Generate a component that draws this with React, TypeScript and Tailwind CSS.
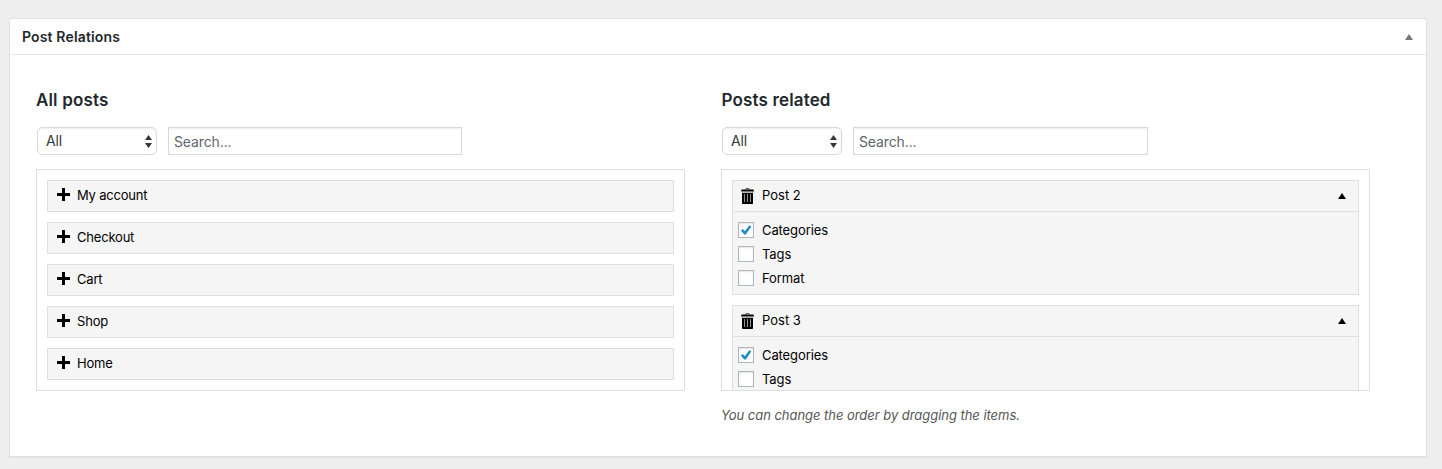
import React from "react";

const posts = ["My account", "Checkout", "Cart", "Shop", "Home"];
const related = [
  { title: "Post 2", parts: ["Categories", "Tags", "Format"] },
  { title: "Post 3", parts: ["Categories", "Tags"] },
];

function PlusIcon() {
  return (
    <svg width="13" height="13" viewBox="0 0 13 13" shapeRendering="crispEdges" className="mb-[3px] ml-[9px] mr-[7px] shrink-0">
      <path d="M5 0h3v5h5v3H8v5H5V8H0V5h5z" fill="#000" />
    </svg>
  );
}

function TrashIcon() {
  return (
    <svg width="13" height="16" viewBox="0 0 13 16" className="ml-2 mr-2 shrink-0">
      <path d="M4.500 1.600C4.600.8 5 .5 6.500.5s1.900.3 2 1.100" fill="none" stroke="#222" strokeWidth="1" />
      <path d="M.6 1.500h11.800L13 3.600H0z" fill="#000" />
      <path d="M1 4.800h11v10.400q0 .8-.8.800H1.800Q1 16 1 15.200z" fill="#000" />
      <path d="M3.500 6v8M6.500 6v8M9.500 6v8" stroke="#8f8f8f" strokeWidth="1" />
    </svg>
  );
}

function Triangle({ className }: { className: string }) {
  return (
    <svg width="8" height="6" viewBox="0 0 8 6" className={className}>
      <path d="M4 0l4 6H0z" fill="currentColor" />
    </svg>
  );
}

function Filters({ inputWidth }: { inputWidth: string }) {
  return (
    <div className="ml-px flex h-7 gap-[11px]">
      <div className="flex w-[120px] items-center justify-between rounded-[5px] border border-[#d9d9d9] bg-white pl-2 pr-1 text-[14px] text-[#32373c] shadow-[inset_0_1px_2px_rgba(0,0,0,0.07)]">
        <span className="tracking-[-0.1px]">All</span>
        <svg width="7" height="13" viewBox="0 0 7 13" className="text-[#32373c]">
          <path d="M3.500 0L7 5H0zM0 8h7l-3.500 5z" fill="currentColor" />
        </svg>
      </div>
      <input
        placeholder="Search..."
        className={`${inputWidth} border border-[#d9d9d9] bg-white px-[5px] pt-[2px] text-[14px] tracking-[-0.12px] text-[#32373c] shadow-[inset_0_1px_2px_rgba(0,0,0,0.07)] outline-none placeholder:text-[#5f656a]`}
      />
    </div>
  );
}

function Checkbox({ checked }: { checked: boolean }) {
  return (
    <span className="flex h-4 w-4 shrink-0 items-center justify-center border border-[#b0b5ba] bg-white shadow-[inset_0_1px_2px_rgba(0,0,0,0.1)]">
      {checked && (
        <svg width="12" height="12" viewBox="0 0 12 12" className="shrink-0">
          <path d="M.9 6.400l2-1.500 1.900 2.300L9.400 1.300l1.900 1.200L5.800 10.500H4.200z" fill="#1e8cbe" />
        </svg>
      )}
    </span>
  );
}

function RelatedItem({ title, parts }: { title: string; parts: string[] }) {
  return (
    <div className="h-[115px] shrink-0 border border-[#dfdfdf] bg-[#f5f5f5]">
      <div className="flex h-[31px] items-center border-b border-[#dfdfdf]">
        <TrashIcon />
        <span className="pb-[2px]">{title}</span>
        <Triangle className="mb-px ml-auto mr-3 text-black" />
      </div>
      <div className="flex flex-col gap-2 pl-[5px] pt-[10px]">
        {parts.map((part) => (
          <label key={part} className="flex h-4 items-center gap-2">
            <Checkbox checked={part === "Categories"} />
            <span className="tracking-[-0.1px]">{part}</span>
          </label>
        ))}
      </div>
    </div>
  );
}

export default function App() {
  return (
    <div className="h-[469px] overflow-hidden bg-[#eee] pl-[9px] pt-[18px] font-['Inter','Liberation_Sans',sans-serif] text-[13px] leading-[18px] text-black">
      <section className="h-[439px] w-[1418px] border border-[#e1e1e1] bg-white shadow-[0_1px_1px_rgba(0,0,0,0.04)]">
        <header className="flex h-9 items-center justify-between border-b border-[#e8e8e8] pl-3 pr-[14px] text-[14px] font-semibold text-[#23282d]">
          <h2 className="tracking-[0.15px]">Post Relations</h2>
          <Triangle className="-mr-px text-[#72777c]" />
        </header>
        <div className="flex gap-9 pl-[26px] pt-[34px]">
          <div className="w-[649px]">
            <h3 className="mb-[15px] h-[23px] text-[17px] font-semibold leading-[23px] tracking-[0.15px] text-[#23282d]">All posts</h3>
            <Filters inputWidth="w-[294px]" />
            <div className="mt-[14px] flex h-[222px] flex-col gap-[10px] overflow-hidden border border-[#dfdfdf] p-[10px]">
              {posts.map((post) => (
                <div key={post} className="flex h-8 shrink-0 items-center border border-[#dfdfdf] bg-[#f5f5f5]">
                  <PlusIcon />
                  <span className="pb-[2px] tracking-[-0.2px]">{post}</span>
                </div>
              ))}
            </div>
          </div>
          <div className="w-[649px]">
            <h3 className="mb-[15px] h-[23px] pl-[0.5px] text-[17px] font-semibold leading-[23px] tracking-[0.15px] text-[#23282d]">Posts related</h3>
            <Filters inputWidth="w-[295px]" />
            <div className="mt-[14px] flex h-[222px] flex-col gap-[10px] overflow-hidden border border-[#dfdfdf] p-[10px]">
              {related.map((item) => (
                <RelatedItem key={item.title} title={item.title} parts={item.parts} />
              ))}
            </div>
            <p className="mt-[15px] italic tracking-[-0.04px] text-[#555]">You can change the order by dragging the items.</p>
          </div>
        </div>
      </section>
    </div>
  );
}
